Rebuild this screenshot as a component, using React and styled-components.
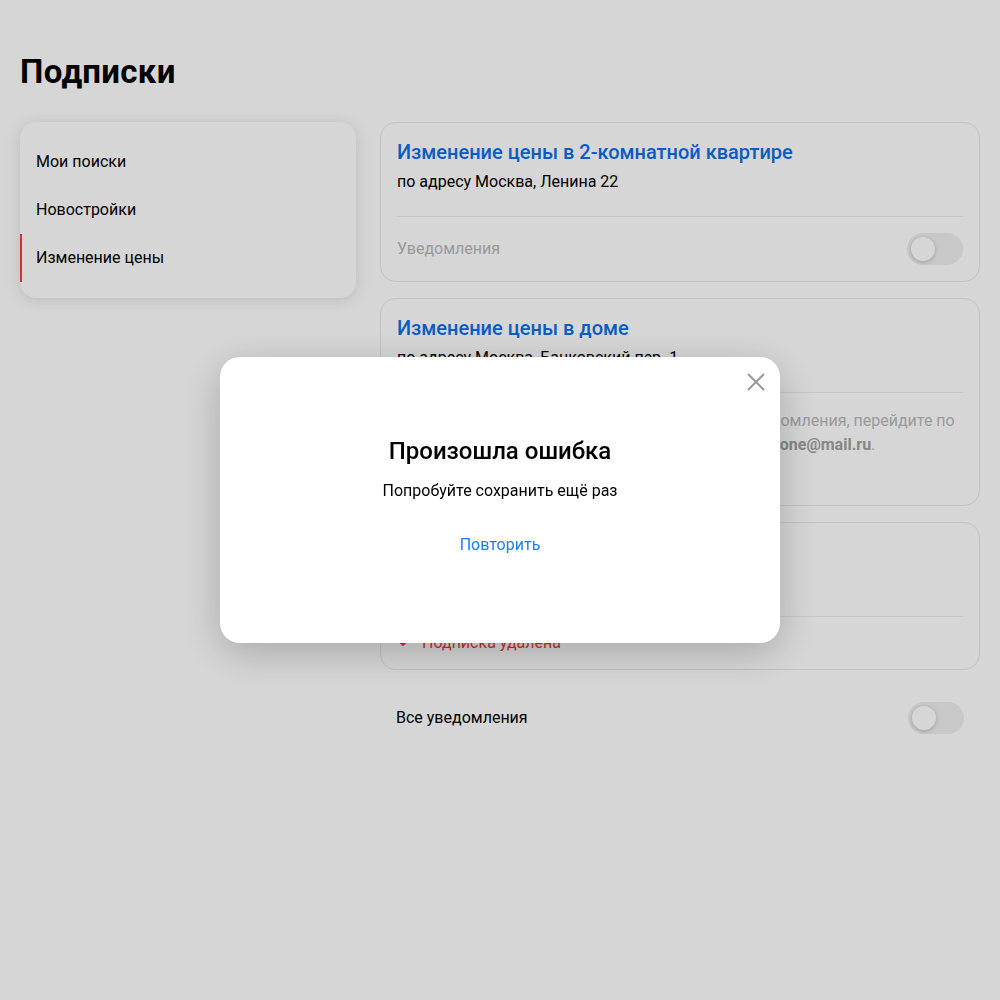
import React from "react";
import styled, { createGlobalStyle } from "styled-components";

const GlobalStyle = createGlobalStyle`
  * { box-sizing: border-box; }
  html, body { margin: 0; padding: 0; background: #ffffff; }
  body {
    font-family: Roboto, "Noto Sans", Arial, sans-serif;
    color: #000;
    -webkit-font-smoothing: antialiased;
  }
`;

const Page = styled.div`
  width: 1000px;
  min-height: 1000px;
  padding: 52px 20px 40px;
`;

const Heading = styled.h1`
  margin: 0 0 30px;
  font-size: 33px;
  line-height: 40px;
  font-weight: 700;
  letter-spacing: 0.3px;
`;

const Layout = styled.div`
  display: grid;
  grid-template-columns: 336px 600px;
  column-gap: 24px;
  align-items: start;
`;

const Sidebar = styled.nav`
  background: #fff;
  border-radius: 16px;
  padding: 16px 0;
  box-shadow: 0 2px 16px rgba(0, 0, 0, 0.13);
  display: flex;
  flex-direction: column;
`;

const NavItem = styled.a`
  display: flex;
  align-items: center;
  height: 48px;
  padding-left: 14px;
  padding-bottom: 1px;
  font-size: 16px;
  color: #000;
  text-decoration: none;
  border-left: 2px solid ${(p) => (p.$active ? "#ff3b3b" : "transparent")};
`;

const Main = styled.div`
  display: flex;
  flex-direction: column;
  gap: 16px;
`;

const Card = styled.section`
  border: 1px solid #e8e8e8;
  border-radius: 16px;
  padding: 0 16px;
  background: #fff;
`;

const CardHead = styled.div`
  padding: 16px 0 22px;
  border-bottom: 1px solid #eeeeee;
`;

const CardTitle = styled.a`
  display: block;
  font-size: 20px;
  line-height: 26px;
  font-weight: 500;
  color: #0c6ee8;
  text-decoration: none;
`;

const CardAddress = styled.div`
  margin-top: 5px;
  font-size: 16px;
  line-height: 24px;
  color: #000;
`;

const Row = styled.div`
  display: flex;
  align-items: center;
  justify-content: space-between;
  padding: ${(p) => p.$pad || "16px"} 0;
`;

const RowLabel = styled.span`
  font-size: 16px;
  line-height: 24px;
  color: ${(p) => p.$color || "#000"};
`;

const Note = styled.div`
  padding: 16px 0 16px;
  font-size: 16px;
  line-height: 24px;
  color: #b8b8b8;
  white-space: nowrap;

  b {
    color: #a0a0a0;
    font-weight: 700;
  }
`;

const NoteLink = styled.a`
  display: block;
  margin-top: 8px;
  font-size: 16px;
  line-height: 24px;
  color: #0c6ee8;
  text-decoration: none;
`;

const Status = styled.span`
  display: flex;
  align-items: center;
  gap: 15px;
  padding-left: 2px;
  font-size: 16px;
  line-height: 24px;
  color: #f63434;
`;

const Toggle = styled.span`
  position: relative;
  display: inline-block;
  width: 56px;
  height: 32px;
  border-radius: 16px;
  background: #efefef;
  flex-shrink: 0;

  &::after {
    content: "";
    position: absolute;
    top: 4px;
    left: 4px;
    width: 24px;
    height: 24px;
    border-radius: 50%;
    background: #fff;
    box-shadow: 0 1px 4px rgba(0, 0, 0, 0.22);
  }
`;

const AllRow = styled.div`
  display: flex;
  align-items: center;
  justify-content: space-between;
  padding: 0 16px;
  margin-top: 16px;
`;

const Backdrop = styled.div`
  position: fixed;
  inset: 0;
  background: rgba(0, 0, 0, 0.16);
  display: flex;
  align-items: center;
  justify-content: center;
`;

const Modal = styled.div`
  position: relative;
  width: 560px;
  height: 286px;
  background: #fff;
  border-radius: 20px;
  box-shadow: 0 10px 40px rgba(0, 0, 0, 0.22);
  display: flex;
  flex-direction: column;
  align-items: center;
  padding-top: 78px;
  text-align: center;
`;

const CloseButton = styled.button`
  position: absolute;
  top: 13px;
  right: 12px;
  width: 24px;
  height: 24px;
  padding: 0;
  border: 0;
  background: transparent;
  display: flex;
  align-items: center;
  justify-content: center;
  cursor: pointer;
`;

const ModalTitle = styled.h2`
  margin: 0;
  font-size: 24px;
  line-height: 32px;
  font-weight: 500;
  color: #000;
`;

const ModalText = styled.p`
  margin: 12px 0 0;
  font-size: 16px;
  line-height: 24px;
  color: #000;
`;

const RetryLink = styled.a`
  margin-top: 30px;
  font-size: 16px;
  line-height: 24px;
  color: #1a7fff;
  text-decoration: none;
  cursor: pointer;
`;

function HeartIcon() {
  return (
    <svg width="8" height="8" viewBox="0 0 12 12" aria-hidden="true">
      <path
        d="M6 11 L1.4 6.2 A2.7 2.7 0 0 1 6 2.4 A2.7 2.7 0 0 1 10.6 6.2 Z"
        fill="#f63434"
      />
    </svg>
  );
}

function CloseIcon() {
  return (
    <svg width="20" height="20" viewBox="0 0 20 20" aria-hidden="true">
      <path d="M2 2 L18 18 M18 2 L2 18" stroke="#999" strokeWidth="2" />
    </svg>
  );
}

export default function App() {
  return (
    <>
      <GlobalStyle />
      <Page>
        <Heading>Подписки</Heading>
        <Layout>
          <Sidebar>
            <NavItem>Мои поиски</NavItem>
            <NavItem>Новостройки</NavItem>
            <NavItem $active>Изменение цены</NavItem>
          </Sidebar>
          <Main>
            <Card>
              <CardHead>
                <CardTitle>Изменение цены в 2-комнатной квартире</CardTitle>
                <CardAddress>по адресу Москва, Ленина 22</CardAddress>
              </CardHead>
              <Row>
                <RowLabel $color="#b6b6b6">Уведомления</RowLabel>
                <Toggle />
              </Row>
            </Card>
            <Card>
              <CardHead>
                <CardTitle>Изменение цены в доме</CardTitle>
                <CardAddress>по адресу Москва, Банковский пер. 1</CardAddress>
              </CardHead>
              <Note>
                Подписка не подтверждена. Чтобы включить уведомления, перейдите по
                <br />
                ссылке из письма, которое мы отправили на <b>someone@mail.ru</b>.
                <NoteLink>Отправить ещё раз</NoteLink>
              </Note>
            </Card>
            <Card>
              <CardHead>
                <CardTitle>Изменение цены в квартире</CardTitle>
                <CardAddress>по адресу Москва, Тверская 7</CardAddress>
              </CardHead>
              <Row $pad="14px">
                <Status>
                  <HeartIcon />
                  Подписка удалена
                </Status>
              </Row>
            </Card>
            <AllRow>
              <RowLabel>Все уведомления</RowLabel>
              <Toggle />
            </AllRow>
          </Main>
        </Layout>
      </Page>
      <Backdrop>
        <Modal role="dialog">
          <CloseButton aria-label="Закрыть">
            <CloseIcon />
          </CloseButton>
          <ModalTitle>Произошла ошибка</ModalTitle>
          <ModalText>Попробуйте сохранить ещё раз</ModalText>
          <RetryLink>Повторить</RetryLink>
        </Modal>
      </Backdrop>
    </>
  );
}
